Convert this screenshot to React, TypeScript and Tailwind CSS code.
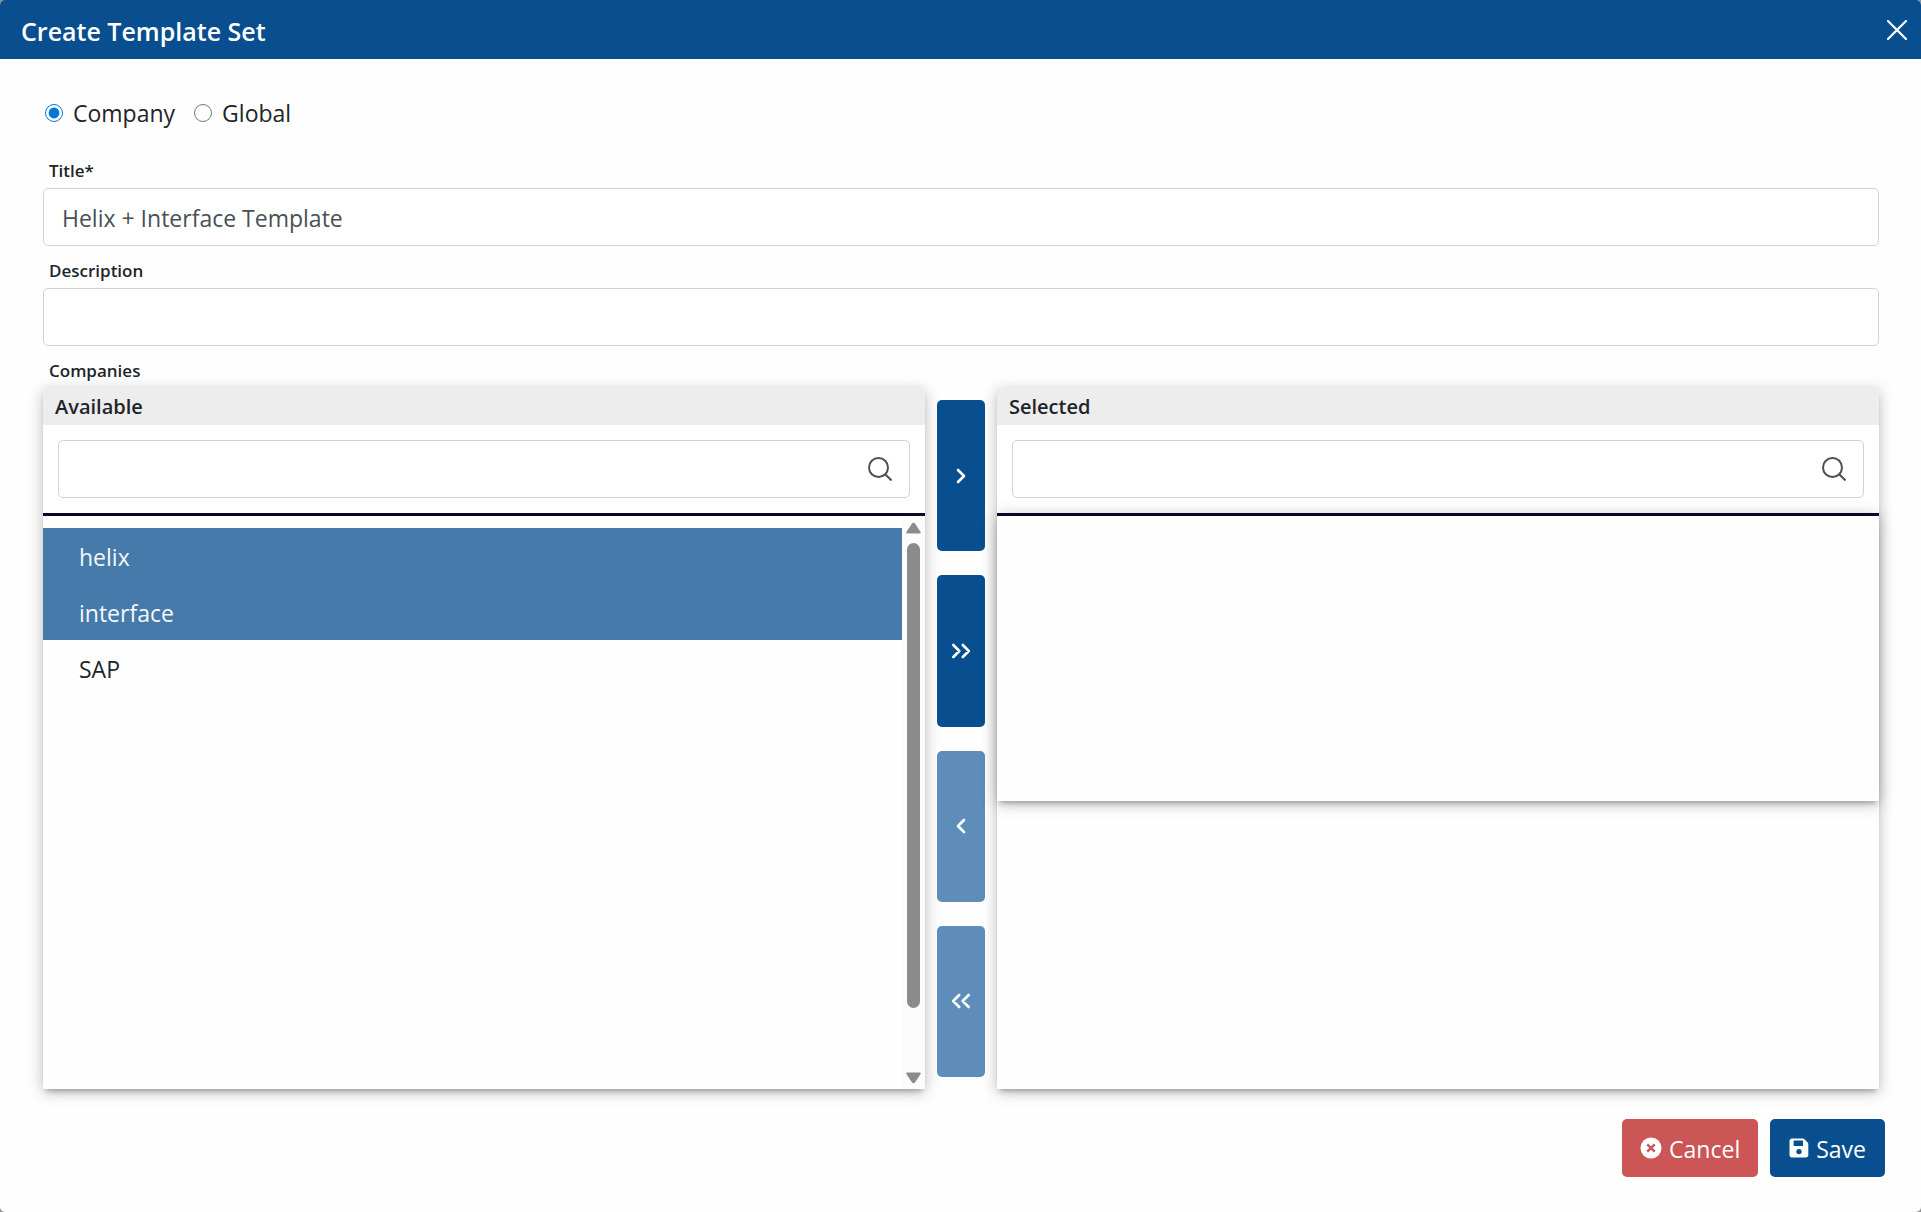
import { useState } from "react";
import type { ReactNode } from "react";

type Scope = "company" | "global";

const available = ["helix", "interface", "SAP"];

const inputClass =
  "h-[58px] w-full rounded-[5px] border border-[#ced4da] bg-white px-[18px] pt-0.5 text-[23px] text-[#495057] outline-none";

const cardShadow =
  "shadow-[0_5px_5px_-3px_rgba(0,0,0,0.25),0_3px_14px_rgba(0,0,0,0.26)]";

function SearchIcon() {
  return (
    <svg viewBox="0 0 24 24" className="size-6" fill="none" stroke="currentColor" strokeWidth="2">
      <circle cx="10.5" cy="10.5" r="9.5" />
      <path d="M17.2 17.2L23.5 23.5" />
    </svg>
  );
}

function Chevrons({ count, left = false }: { count: 1 | 2; left?: boolean }) {
  return (
    <svg
      viewBox="0 0 24 16"
      className={left ? "h-4 w-6 rotate-180" : "h-4 w-6"}
      fill="none"
      stroke="currentColor"
      strokeWidth="2.6"
      strokeLinecap="round"
      strokeLinejoin="round"
    >
      {count === 1 ? (
        <path d="M9 2l6 6-6 6" />
      ) : (
        <path d="M4.3 2l6 6-6 6M13.8 2l6 6-6 6" />
      )}
    </svg>
  );
}

function CancelIcon() {
  return (
    <svg viewBox="0 0 22 22" className="size-[22px]">
      <circle cx="11" cy="11" r="10.5" fill="currentColor" />
      <path d="M7.3 7.3l7.4 7.4M14.7 7.3l-7.4 7.4" stroke="#cb5655" strokeWidth="2.4" />
    </svg>
  );
}

function SaveIcon() {
  return (
    <svg viewBox="0 0 20 20" className="size-5" fill="currentColor" fillRule="evenodd">
      <path d="M3 .5h10.8c.6 0 1.1.2 1.5.6l3.4 3.3c.4.4.6.9.6 1.5V17c0 1.400-1 2.400-2.400 2.400H3C1.600 19.400.5 18.400.5 17V3C.5 1.600 1.600.5 3 .5zM4.600 3.200v4.200c0 .4.2.6.6.6h8.200c.4 0 .6-.2.6-.6V3.200c0-.4-.2-.6-.6-.6H5.200c-.4 0-.6.2-.6.6zM10 10.900a2.700 2.700 0 100 5.400 2.700 2.700 0 000-5.400z" />
    </svg>
  );
}

function Field({ id, label, defaultValue }: { id: string; label: string; defaultValue?: string }) {
  return (
    <div className="flex flex-col">
      <label htmlFor={id} className="flex h-[42px] items-center pt-2 pl-1.5 text-[17px] font-semibold">
        {label}
      </label>
      <input id={id} type="text" defaultValue={defaultValue} className={inputClass} />
    </div>
  );
}

function Panel({ title, children }: { title: string; children: ReactNode }) {
  return (
    <section className={`flex min-w-0 flex-1 flex-col bg-[#fefefe] ${cardShadow}`}>
      <h2 className="h-[37px] bg-[#ededed] px-3 text-[20px] leading-[38px] font-semibold text-[#212529]">
        {title}
      </h2>
      <div className="flex items-center bg-white p-[15px]">
        <div className="grid w-full items-center">
          <input
            type="search"
            aria-label={`Search ${title}`}
            className={`col-start-1 row-start-1 ${inputClass}`}
          />
          <span className="pointer-events-none col-start-1 row-start-1 mr-[18px] justify-self-end text-[#495057]">
            <SearchIcon />
          </span>
        </div>
      </div>
      {children}
    </section>
  );
}

function MoveButton({ label, disabled, children }: { label: string; disabled?: boolean; children: ReactNode }) {
  return (
    <button
      type="button"
      aria-label={label}
      disabled={disabled}
      className="flex w-12 flex-1 items-center justify-center rounded-[5px] bg-[#094f90] text-white disabled:bg-[#5e8db9]"
    >
      {children}
    </button>
  );
}

export default function App() {
  const [scope, setScope] = useState<Scope>("company");
  const [marked, setMarked] = useState(["helix", "interface"]);

  function toggle(name: string) {
    setMarked((prev) =>
      prev.includes(name) ? prev.filter((n) => n !== name) : [...prev, name]
    );
  }

  return (
    <div className="min-h-screen bg-[#8f8f8f] font-['Open_Sans','Noto_Sans',sans-serif] text-[#212529]">
      <div className="flex min-h-screen flex-col overflow-hidden rounded-[5px] bg-[#fefefe]">
        <header className="flex h-[59px] items-center justify-between bg-[#094f90] pr-[14px] pl-[21px] text-white">
          <h1 className="pt-1 text-[25px] font-semibold">Create Template Set</h1>
          <button type="button" aria-label="Close">
            <svg viewBox="0 0 20 20" className="size-5" fill="none" stroke="currentColor" strokeWidth="2.2" strokeLinecap="round">
              <path d="M1 1l18 18M19 1L1 19" />
            </svg>
          </button>
        </header>

        <form className="flex flex-col pt-9 pr-[42px] pl-[43px]" onSubmit={(e) => e.preventDefault()}>
          <div className="flex h-[51px] gap-[19px] pl-0.5 text-[23px] leading-[36px]">
            {(["company", "global"] as Scope[]).map((value) => (
              <label key={value} className="flex h-9 items-center gap-2.5">
                <input
                  type="radio"
                  name="scope"
                  checked={scope === value}
                  onChange={() => setScope(value)}
                  className="size-[18px] accent-[#0078d7]"
                />
                {value === "company" ? "Company" : "Global"}
              </label>
            ))}
          </div>

          <Field id="title" label="Title*" defaultValue="Helix + Interface Template" />
          <Field id="description" label="Description" />

          <p className="flex h-[42px] items-center pt-2 pl-1.5 text-[17px] font-semibold">Companies</p>
          <div className="flex gap-3">
            <Panel title="Available">
              <div className="flex h-[576px] border-t-[3px] border-[#0b0826] bg-[#fefefe]">
                <ul className="flex-1 pt-3">
                  {available.map((name) => (
                    <li key={name}>
                      <button
                        type="button"
                        aria-pressed={marked.includes(name)}
                        onClick={() => toggle(name)}
                        className="h-14 w-full px-9 pt-0.5 text-left text-[23px] aria-pressed:bg-[#457aaa] aria-pressed:text-[#f4f8fb]"
                      >
                        {name}
                      </button>
                    </li>
                  ))}
                </ul>
                <div aria-hidden="true" className="flex w-[23px] flex-col items-center bg-[#fcfcfc] pt-1.5 pb-[5px] text-[#8b8b8b]">
                  <svg viewBox="0 0 15 12" className="h-3 w-[15px]" fill="currentColor">
                    <path d="M6 1.500q1.500-1.500 3 0L14.600 10q.6 1.500-1 1.500H1.400q-1.600 0-1-1.500z" />
                  </svg>
                  <div className="mt-[9px] h-[465px] w-[13px] rounded-full bg-[#8b8b8b]" />
                  <svg viewBox="0 0 15 12" className="mt-auto h-3 w-[15px] rotate-180" fill="currentColor">
                    <path d="M6 1.500q1.500-1.500 3 0L14.600 10q.6 1.500-1 1.500H1.400q-1.600 0-1-1.500z" />
                  </svg>
                </div>
              </div>
            </Panel>

            <div className="flex flex-col gap-6 py-3">
              <MoveButton label="Move selected right">
                <Chevrons count={1} />
              </MoveButton>
              <MoveButton label="Move all right">
                <Chevrons count={2} />
              </MoveButton>
              <MoveButton label="Move selected left" disabled>
                <Chevrons count={1} left />
              </MoveButton>
              <MoveButton label="Move all left" disabled>
                <Chevrons count={2} left />
              </MoveButton>
            </div>

            <Panel title="Selected">
              <ul className={`h-[288px] border-t-[3px] border-[#0b0826] bg-[#fefefe] ${cardShadow}`} />
            </Panel>
          </div>
        </form>

        <footer className="flex justify-end gap-3 px-9 pt-[30px] pb-[35px] text-[23px] text-white">
          <button type="button" className="flex h-[58px] items-center gap-[7px] rounded-[5px] bg-[#cb5655] px-[18px]">
            <CancelIcon />
            <span className="pt-0.5">Cancel</span>
          </button>
          <button type="button" className="flex h-[58px] items-center gap-[7px] rounded-[5px] bg-[#094f90] px-[19px]">
            <SaveIcon />
            <span className="pt-0.5">Save</span>
          </button>
        </footer>
      </div>
    </div>
  );
}
